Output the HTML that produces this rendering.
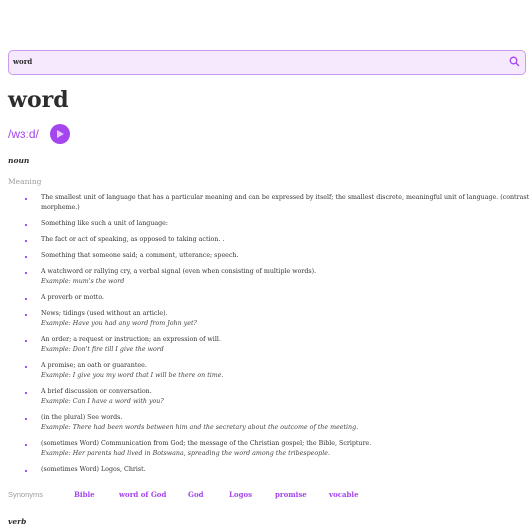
<!DOCTYPE html><html><head><style>
body{margin:0;width:531px;height:531px;background:#fff;font-family:"DejaVu Serif","Liberation Serif",serif;color:#3a3a3a;position:relative;overflow:hidden}
.a{position:absolute;white-space:nowrap;line-height:1}
.t{font-size:6.3px;left:41px;color:#333}
.e{font-size:6.3px;left:41px;font-style:italic;color:#444}
.b{position:absolute;left:25px;width:2px;height:2px;border-radius:50%;background:#8f19e8}
.s{font-size:7px;font-weight:bold;color:#a445ed;top:491px}
</style></head><body>
<div style="position:absolute;left:8px;top:50px;width:516px;height:23px;border:1px solid #c99af0;border-radius:5px;background:#f6e9fd"></div>
<div class="a" style="left:13px;top:58px;font-size:7px;font-weight:bold;color:#2d2d2d">word</div>
<svg style="position:absolute;left:509px;top:56px" width="11" height="11" viewBox="0 0 11 11"><circle cx="4.5" cy="4.5" r="3.3" fill="none" stroke="#a445ed" stroke-width="1.3"/><path d="M7 7L10 10" stroke="#a445ed" stroke-width="1.3"/></svg>
<div class="a" style="left:8px;top:89px;font-size:22px;font-weight:bold;color:#2d2d2d">word</div>
<div class="a" style="left:8px;top:128px;font-size:12px;color:#a445ed;font-family:'Liberation Sans',sans-serif">/wɜːd/</div>
<div style="position:absolute;left:50px;top:124px;width:20px;height:20px;border-radius:50%;background:#a445ed"></div>
<svg style="position:absolute;left:57px;top:130px" width="8" height="8"><path d="M0 0L7 4L0 8Z" fill="#e6c9fa"/></svg>
<div class="a" style="left:8px;top:157px;font-size:7.5px;font-weight:bold;font-style:italic;color:#2d2d2d">noun</div>
<div class="a" style="left:8px;top:178px;font-size:7.5px;color:#9b9b9b">Meaning</div>

<div class="b" style="top:198px"></div><div class="a t" style="top:195px">The smallest unit of language that has a particular meaning and can be expressed by itself; the smallest discrete, meaningful unit of language. (contrast</div>
<div class="a t" style="top:205px">morpheme.)</div>
<div class="b" style="top:224px"></div><div class="a t" style="top:221px">Something like such a unit of language:</div>
<div class="b" style="top:240px"></div><div class="a t" style="top:237px">The fact or act of speaking, as opposed to taking action. .</div>
<div class="b" style="top:256px"></div><div class="a t" style="top:253px">Something that someone said; a comment, utterance; speech.</div>
<div class="b" style="top:272px"></div><div class="a t" style="top:269px">A watchword or rallying cry, a verbal signal (even when consisting of multiple words).</div>
<div class="a e" style="top:279px">Example: mum's the word</div>
<div class="b" style="top:298px"></div><div class="a t" style="top:295px">A proverb or motto.</div>
<div class="b" style="top:314px"></div><div class="a t" style="top:311px">News; tidings (used without an article).</div>
<div class="a e" style="top:321px">Example: Have you had any word from John yet?</div>
<div class="b" style="top:340px"></div><div class="a t" style="top:337px">An order; a request or instruction; an expression of will.</div>
<div class="a e" style="top:347px">Example: Don't fire till I give the word</div>
<div class="b" style="top:366px"></div><div class="a t" style="top:363px">A promise; an oath or guarantee.</div>
<div class="a e" style="top:373px">Example: I give you my word that I will be there on time.</div>
<div class="b" style="top:392px"></div><div class="a t" style="top:389px">A brief discussion or conversation.</div>
<div class="a e" style="top:399px">Example: Can I have a word with you?</div>
<div class="b" style="top:418px"></div><div class="a t" style="top:415px">(in the plural) See words.</div>
<div class="a e" style="top:425px">Example: There had been words between him and the secretary about the outcome of the meeting.</div>
<div class="b" style="top:444px"></div><div class="a t" style="top:441px">(sometimes Word) Communication from God; the message of the Christian gospel; the Bible, Scripture.</div>
<div class="a e" style="top:451px">Example: Her parents had lived in Botswana, spreading the word among the tribespeople.</div>
<div class="b" style="top:470px"></div><div class="a t" style="top:467px">(sometimes Word) Logos, Christ.</div>

<div class="a" style="left:8px;top:491px;font-size:7.5px;color:#9b9b9b;font-family:'Liberation Sans',sans-serif">Synonyms</div>
<div class="a s" style="left:74px">Bible</div>
<div class="a s" style="left:119px">word of God</div>
<div class="a s" style="left:188px">God</div>
<div class="a s" style="left:229px">Logos</div>
<div class="a s" style="left:275px">promise</div>
<div class="a s" style="left:329px">vocable</div>
<div class="a" style="left:8px;top:518px;font-size:7.5px;font-weight:bold;font-style:italic;color:#2d2d2d">verb</div>
</body></html>
